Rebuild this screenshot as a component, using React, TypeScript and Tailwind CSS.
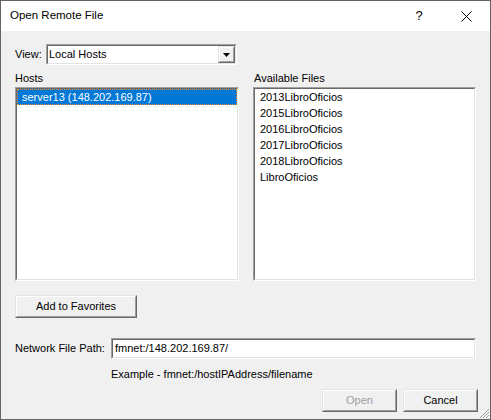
const FILES = [
  "2013LibroOficios",
  "2015LibroOficios",
  "2016LibroOficios",
  "2017LibroOficios",
  "2018LibroOficios",
  "LibroOficios",
];

// classic sunken 3D edge (list boxes, edits)
function Sunken({ className = "", children }: { className?: string; children?: React.ReactNode }) {
  return (
    <div className={`border border-t-[#a0a0a0] border-l-[#a0a0a0] border-b-white border-r-white ${className}`}>
      <div className="w-full h-full border border-t-[#696969] border-l-[#696969] border-b-[#e3e3e3] border-r-[#e3e3e3] bg-white overflow-hidden">
        {children}
      </div>
    </div>
  );
}

function Button({ label, disabled, className = "" }: { label: string; disabled?: boolean; className?: string }) {
  return (
    <div className={`border border-t-[#e3e3e3] border-l-[#e3e3e3] border-b-[#696969] border-r-[#696969] ${className}`}>
      <div
        className={`w-full h-full border border-t-white border-l-white border-b-[#a0a0a0] border-r-[#a0a0a0] bg-[#f0f0f0] flex items-center justify-center text-[11px] ${
          disabled ? "text-[#a0a0a0]" : "text-black"
        }`}
      >
        {label}
      </div>
    </div>
  );
}

export default function App() {
  return (
    <div
      className="w-[491px] h-[420px] border border-[#646464] bg-[#f0f0f0] flex flex-col relative text-black"
      style={{ fontFamily: '"Liberation Sans", Arial, sans-serif' }}
    >
      {/* title bar */}
      <div className="h-[30px] bg-white flex items-center shrink-0">
        <span className="pl-[9px] text-[11.5px] flex-1">Open Remote File</span>
        <span className="text-[13px] w-[12px] mr-[36px] text-center">?</span>
        <svg width="11" height="11" viewBox="0 0 11 11" className="mr-[18px]">
          <path d="M0.5 0.5 L10.5 10.5 M10.5 0.5 L0.5 10.5" stroke="#000" strokeWidth="1" />
        </svg>
      </div>

      <div className="flex flex-col pl-[14px] text-[11px] leading-[13px]">
        {/* view row */}
        <div className="flex items-center mt-[13px] h-[21px]">
          <span className="w-[31px]">View:</span>
          <Sunken className="w-[191px] h-[21px]">
            <div className="flex h-full items-center">
              <span className="flex-1 pl-[1px]">Local Hosts</span>
              <div className="w-[17px] h-[17px] border border-t-[#e3e3e3] border-l-[#e3e3e3] border-b-[#696969] border-r-[#696969]">
                <div className="w-full h-full border border-t-white border-l-white border-b-[#a0a0a0] border-r-[#a0a0a0] bg-[#f0f0f0] flex items-center justify-center">
                  <svg width="7" height="4" viewBox="0 0 7 4">
                    <path d="M0 0 H7 L3.5 4 Z" fill="#000" />
                  </svg>
                </div>
              </div>
            </div>
          </Sunken>
        </div>

        {/* labels */}
        <div className="flex mt-[5px] h-[16px] items-center">
          <span className="w-[239px]">Hosts</span>
          <span>Available Files</span>
        </div>

        {/* lists */}
        <div className="flex mt-[1px] gap-[14px]">
          <Sunken className="w-[224px] h-[194px]">
            <div className="bg-[#0078d7] text-white h-[16px] flex items-center pl-[5px] outline-1 outline-dotted outline-[#ff8a28] -outline-offset-1">
              server13 (148.202.169.87)
            </div>
          </Sunken>
          <Sunken className="w-[223px] h-[194px]">
            {FILES.map((f) => (
              <div key={f} className="h-[16px] flex items-center pl-[5px]">
                {f}
              </div>
            ))}
          </Sunken>
        </div>

        <Button label="Add to Favorites" className="w-[122px] h-[23px] mt-[14px]" />

        {/* path row */}
        <div className="flex items-center mt-[20px] h-[21px]">
          <span className="w-[96px]">Network File Path:</span>
          <Sunken className="w-[365px] h-[21px]">
            <div className="h-full flex items-center pl-[2px]">fmnet:/148.202.169.87/</div>
          </Sunken>
        </div>
        <div className="pl-[96px] mt-[9px]">Example - fmnet:/hostIPAddress/filename</div>

        {/* action buttons */}
        <div className="flex mt-[8px] pl-[307px] gap-[6px]">
          <Button label="Open" disabled className="w-[75px] h-[23px]" />
          <Button label="Cancel" className="w-[75px] h-[23px]" />
        </div>
      </div>

      {/* size grip */}
      <svg width="12" height="12" viewBox="0 0 12 12" className="absolute right-0 bottom-0">
        <path d="M11 2 L2 11 M11 5 L5 11 M11 8 L8 11" stroke="#a0a0a0" strokeWidth="1" />
      </svg>
    </div>
  );
}
